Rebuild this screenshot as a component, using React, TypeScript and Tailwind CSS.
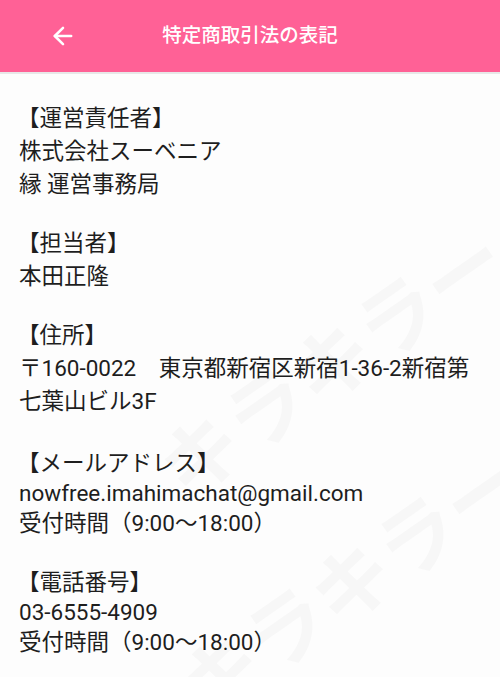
import { ArrowLeft } from 'lucide-react';

const sections = [
  { title: '【運営責任者】', lines: ['株式会社スーベニア', '縁 運営事務局'], cls: 'leading-[33px]' },
  { title: '【担当者】', lines: ['本田正隆'], cls: 'leading-[33px] mt-[26px]' },
  { title: '【住所】', lines: ['〒160-0022　東京都新宿区新宿1-36-2新宿第', '七葉山ビル3F'], cls: 'leading-[33px] mt-[26px]' },
  { title: '【メールアドレス】', lines: ['nowfree.imahimachat@gmail.com', '受付時間（9:00〜18:00）'], cls: 'leading-[30px] mt-[30px]' },
  { title: '【電話番号】', lines: ['03-6555-4909', '受付時間（9:00〜18:00）'], cls: 'leading-[30px] mt-[29px]' },
];

export default function App() {
  return (
    <div
      className="relative w-[500px] h-[677px] overflow-hidden bg-[#fdfdfd]"
      style={{ fontFamily: "Roboto, 'Noto Sans CJK JP', sans-serif" }}
    >
      <header className="relative h-[74px] bg-[#ff6196] border-b-2 border-[#e8e8e8] flex items-center justify-center">
        <button className="absolute left-[49px] top-[22px] text-white" aria-label="back">
          <ArrowLeft className="w-[28px] h-[28px]" strokeWidth={2.2} />
        </button>
        <h1 className="text-white text-[19.5px] font-medium">特定商取引法の表記</h1>
      </header>

      {/* watermark */}
      <div className="pointer-events-none absolute inset-0 select-none">
        <span className="absolute left-[170px] top-[420px] origin-left -rotate-[35deg] text-[80px] font-bold text-[#f7f7f7] whitespace-nowrap">
          キラキラー
        </span>
        <span className="absolute left-[190px] top-[640px] origin-left -rotate-[35deg] text-[80px] font-bold text-[#f7f7f7] whitespace-nowrap">
          キラキラー
        </span>
      </div>

      <main className="relative flex flex-col px-[19px] pt-[28px] text-[22.5px] text-[#1e1e1e]">
        {sections.map((s) => (
          <section key={s.title} className={s.cls}>
            <div className="-ml-[2px]">{s.title}</div>
            {s.lines.map((l) => (
              <div key={l} className="whitespace-nowrap">{l}</div>
            ))}
          </section>
        ))}
      </main>
    </div>
  );
}
